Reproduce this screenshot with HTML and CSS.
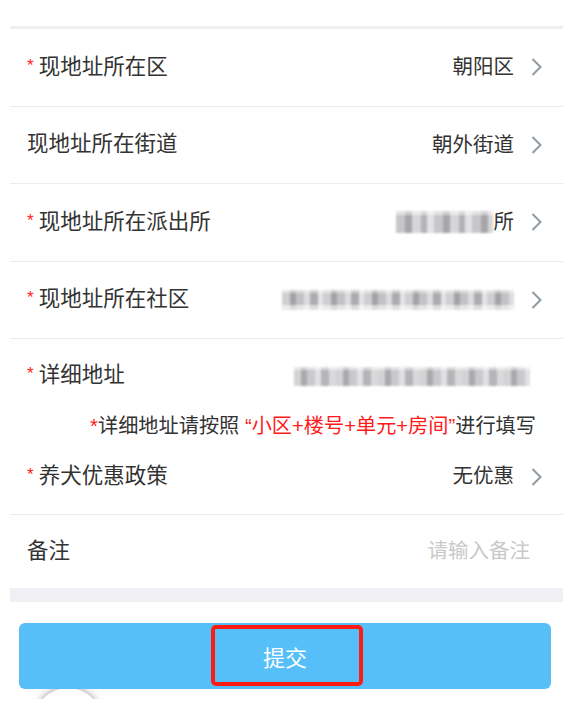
FILE: index.html
```html
<!DOCTYPE html>
<html lang="zh-CN">
<head>
    <meta charset="UTF-8">
    <meta name="viewport" content="width=device-width, initial-scale=1.0">
    <title>养犬登记 - 地址信息</title>
    <link rel="stylesheet" href="styles.css">
</head>
<body>
    <div class="form">
        <!-- 地址选择 -->
        <div class="row">
            <span class="label"><i class="req">*</i>现地址所在区</span>
            <span class="value">朝阳区</span>
            <svg class="arrow" viewBox="0 0 11 18"><polyline points="1.5,1 9.5,9 1.5,17"/></svg>
        </div>
        <div class="row">
            <span class="label">现地址所在街道</span>
            <span class="value">朝外街道</span>
            <svg class="arrow" viewBox="0 0 11 18"><polyline points="1.5,1 9.5,9 1.5,17"/></svg>
        </div>
        <div class="row">
            <span class="label"><i class="req">*</i>现地址所在派出所</span>
            <span class="value"><span class="mosaic mosaic-a"></span>所</span>
            <svg class="arrow" viewBox="0 0 11 18"><polyline points="1.5,1 9.5,9 1.5,17"/></svg>
        </div>
        <div class="row">
            <span class="label"><i class="req">*</i>现地址所在社区</span>
            <span class="value"><span class="mosaic mosaic-b"></span></span>
            <svg class="arrow" viewBox="0 0 11 18"><polyline points="1.5,1 9.5,9 1.5,17"/></svg>
        </div>

        <!-- 详细地址 -->
        <div class="detail">
            <div class="row row-plain">
                <span class="label"><i class="req">*</i>详细地址</span>
                <span class="value value-input"><span class="mosaic mosaic-c"></span></span>
            </div>
            <p class="hint"><span class="red">*</span>详细地址请按照 <span class="red">“小区+楼号+单元+房间”</span>进行填写</p>
        </div>

        <div class="row row-policy">
            <span class="label"><i class="req">*</i>养犬优惠政策</span>
            <span class="value">无优惠</span>
            <svg class="arrow" viewBox="0 0 11 18"><polyline points="1.5,1 9.5,9 1.5,17"/></svg>
        </div>
        <div class="row row-note">
            <span class="label">备注</span>
            <span class="value value-input placeholder">请输入备注</span>
        </div>
        <div class="gap"></div>
    </div>

    <div class="footer">
        <button class="submit" type="button">提交<span class="mark"></span></button>
        <span class="float-ball"></span>
    </div>
</body>
</html>
```

FILE: styles.css
```css
* {
    margin: 0;
    padding: 0;
    box-sizing: border-box;
}

body {
    background-color: #ffffff;
    font-family: 'Liberation Sans', 'Noto Sans CJK SC', sans-serif;
    color: #333333;
    padding-top: 26px;
}

.form {
    margin-left: 10px;
    border-top: 3px solid #efeff3;
}

/* 表单行 */
.row {
    display: flex;
    align-items: center;
    height: 77.5px;
    padding: 0 21px 0 17px;
    border-bottom: 1px solid #ececef;
}

.label {
    flex: 1;
    font-size: 21.5px;
    line-height: 1;
    white-space: nowrap;
}

.req {
    font-style: normal;
    color: #ff2020;
    font-size: 17px;
    margin-right: 5px;
    vertical-align: 3px;
}

.value {
    display: flex;
    align-items: center;
    font-size: 20.5px;
    line-height: 1;
    color: #333333;
}

.arrow {
    width: 11px;
    height: 18px;
    margin-left: 17px;
    fill: none;
    stroke: #8e9ba5;
    stroke-width: 2;
}

.value-input {
    margin-right: 12px;
}

.placeholder {
    color: #c9c9c9;
}

/* 打码区域 */
.mosaic {
    display: inline-block;
    height: 22px;
    filter: blur(1.3px);
}

.mosaic-a {
    width: 97px;
    margin-right: 1px;
    background:
        linear-gradient(180deg, rgba(255,255,255,0.5) 0 4px, transparent 4px),
        repeating-linear-gradient(90deg, #c7c7c9 0 9px, #a6a5a8 9px 16px, #d6d6d8 16px 25px, #b3b3b5 25px 31px, #e2e2e4 31px 38px);
}

.mosaic-b {
    width: 232px;
    height: 20px;
    background:
        linear-gradient(180deg, rgba(255,255,255,0.45) 0 3px, transparent 3px 15px, rgba(255,255,255,0.6) 15px),
        repeating-linear-gradient(90deg, #cfcfd1 0 8px, #a3a2a5 8px 14px, #c2c1c4 14px 22px, #dcdcde 22px 28px, #acabae 28px 36px, #e4e4e6 36px 41px);
}

.mosaic-c {
    width: 236px;
    height: 19px;
    background:
        linear-gradient(180deg, rgba(255,255,255,0.5) 0 3px, transparent 3px),
        repeating-linear-gradient(90deg, #d3d3d5 0 7px, #aaa9ac 7px 13px, #c9c8cb 13px 21px, #e1e1e3 21px 27px, #b5b4b7 27px 35px, #d9d9db 35px 42px);
}

/* 详细地址 */
.detail {
    display: flex;
    flex-direction: column;
}

.row-plain {
    height: 74px;
    border-bottom: none;
}

.hint {
    height: 26px;
    line-height: 26px;
    text-align: right;
    padding-right: 27px;
    font-size: 20.2px;
    white-space: nowrap;
}

.red {
    color: #ff1a1a;
}

.row-policy {
    height: 76px;
}

.row-note {
    height: 73px;
    border-bottom: none;
}

.gap {
    height: 14px;
    background-color: #efeff4;
}

/* 提交按钮 */
.footer {
    position: relative;
    height: 119px;
    overflow: hidden;
    padding: 21px 12px 0 19px;
}

.submit {
    position: relative;
    z-index: 2;
    display: block;
    width: 532px;
    height: 66px;
    border: none;
    border-radius: 6px;
    background-color: #56bff8;
    color: #ffffff;
    font-family: 'Liberation Sans', 'Noto Sans CJK SC', sans-serif;
    font-size: 22px;
}

.mark {
    position: absolute;
    left: 192px;
    top: 2px;
    width: 152px;
    height: 61px;
    border: 4px solid #ff1a12;
    border-radius: 5px;
}

/* 悬浮球，只露出顶部一段 */
.float-ball {
    position: absolute;
    z-index: 1;
    left: 28px;
    top: 82px;
    width: 80px;
    height: 15px;
    overflow: hidden;
}

.float-ball::before {
    content: "";
    position: absolute;
    left: 6px;
    top: 4px;
    width: 68px;
    height: 68px;
    border-radius: 50%;
    background-color: #ffffff;
    box-shadow: 0 -2px 7px rgba(0, 0, 0, 0.3);
}
```
